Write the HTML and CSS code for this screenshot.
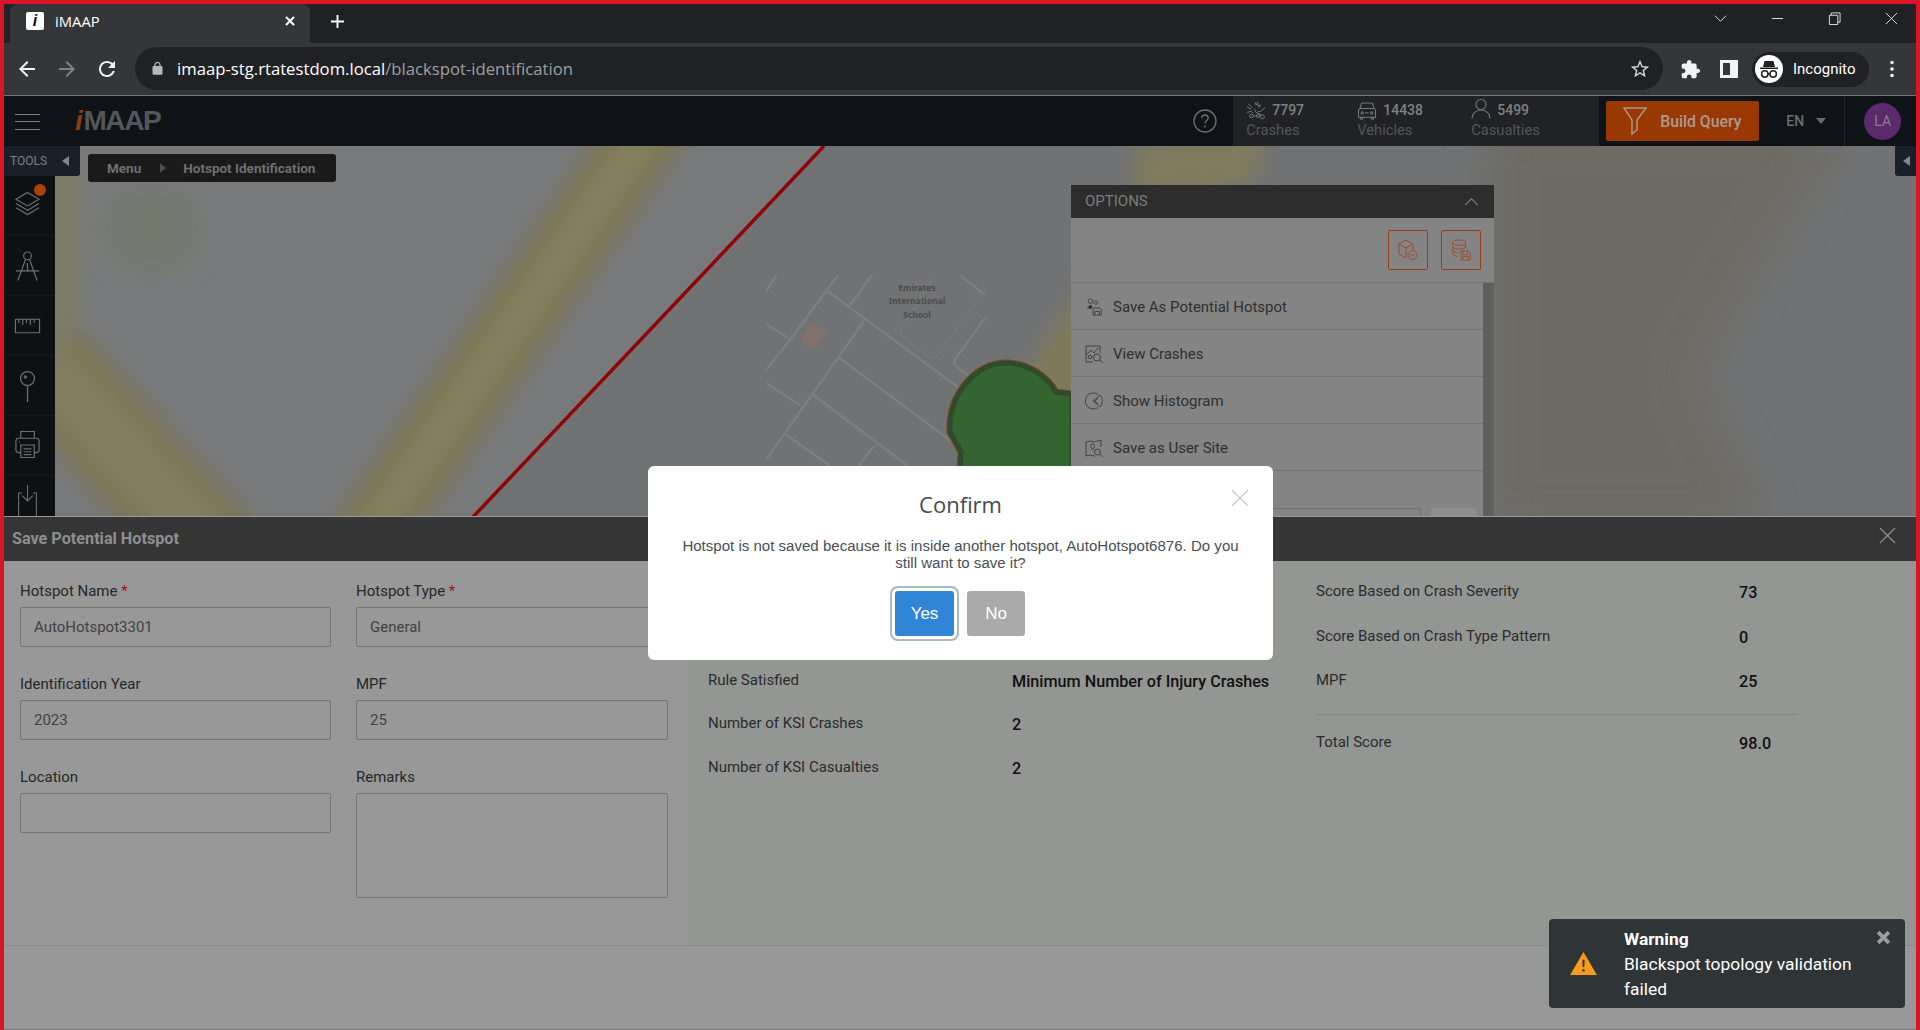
FILE: index.html
```html
<!DOCTYPE html>
<html lang="en">
<head>
<meta charset="utf-8">
<title>iMAAP</title>
<link rel="stylesheet" href="styles.css">
</head>
<body>
<div class="frame">
  <div class="tabstrip">
    <div class="tab">
      <span class="favicon">i</span>
      <span class="tab-title">iMAAP</span>
      <svg class="tab-close" viewBox="0 0 12 12"><path d="M2 2l8 8M10 2l-8 8"/></svg>
    </div>
    <svg class="new-tab" viewBox="0 0 16 16"><path d="M8 1v14M1 8h14"/></svg>
    <div class="win-controls">
      <svg class="win win-chevron" viewBox="0 0 14 14"><path d="M1 4l6 6 6-6"/></svg>
      <svg class="win win-min" viewBox="0 0 14 14"><path d="M1 7h12"/></svg>
      <svg class="win win-restore" viewBox="0 0 14 14"><path d="M1.5 3.5h9v10h-9zM3.5 3.5v-2.500h9.500v10h-2.500"/></svg>
      <svg class="win win-close" viewBox="0 0 14 14"><path d="M1 1l12 12M13 1L1 13"/></svg>
    </div>
  </div>
  <div class="toolbar">
    <svg class="nav nav-back" viewBox="0 0 24 24"><path d="M20 11H7.83l5.59-5.59L12 4l-8 8 8 8 1.41-1.41L7.83 13H20v-2z"/></svg>
    <svg class="nav nav-fwd" viewBox="0 0 24 24"><path d="M4 11h12.17l-5.59-5.59L12 4l8 8-8 8-1.41-1.41L16.17 13H4v-2z"/></svg>
    <svg class="nav nav-reload" viewBox="0 0 24 24"><path d="M17.65 6.35C16.2 4.9 14.21 4 12 4c-4.42 0-7.99 3.58-7.99 8s3.57 8 7.99 8c3.73 0 6.84-2.55 7.73-6h-2.08c-.82 2.33-3.04 4-5.65 4-3.31 0-6-2.69-6-6s2.69-6 6-6c1.66 0 3.14.69 4.22 1.78L13 11h7V4l-2.35 2.35z"/></svg>
    <div class="omnibox">
      <svg class="lock" viewBox="0 0 24 24"><path d="M18 8h-1V6c0-2.76-2.24-5-5-5S7 3.24 7 6v2H6c-1.1 0-2 .9-2 2v10c0 1.1.9 2 2 2h12c1.1 0 2-.9 2-2V10c0-1.1-.9-2-2-2zM9 8V6c0-1.66 1.34-3 3-3s3 1.34 3 3v2H9z"/></svg>
      <span class="url"><span class="url-host">imaap-stg.rtatestdom.local</span>/blackspot-identification</span>
      <svg class="star" viewBox="0 0 24 24"><path d="M22 9.24l-7.19-.62L12 2 9.19 8.63 2 9.24l5.46 4.73L5.82 21 12 17.27 18.18 21l-1.63-7.03L22 9.24zM12 15.4l-3.76 2.27 1-4.28-3.32-2.88 4.38-.38L12 6.1l1.71 4.04 4.38.38-3.32 2.88 1 4.28L12 15.4z"/></svg>
    </div>
    <svg class="ext" viewBox="0 0 24 24"><path d="M20.5 11H19V7c0-1.1-.9-2-2-2h-4V3.5C13 2.12 11.88 1 10.5 1S8 2.12 8 3.5V5H4c-1.1 0-1.99.9-1.99 2v3.8H3.5c1.49 0 2.7 1.21 2.7 2.7s-1.21 2.7-2.7 2.7H2V20c0 1.1.9 2 2 2h3.8v-1.5c0-1.49 1.21-2.7 2.7-2.7 1.49 0 2.7 1.21 2.7 2.7V22H17c1.1 0 2-.9 2-2v-4h1.5c1.38 0 2.5-1.12 2.5-2.5S21.88 11 20.5 11z"/></svg>
    <svg class="sidepanel" viewBox="0 0 18 18"><path fill-rule="evenodd" d="M0 0h18v18H0zM3 3v12h7V3z"/></svg>
    <div class="incognito">
      <svg class="inc-icon" viewBox="0 0 28 28"><circle cx="14" cy="14" r="14" fill="#fff"/><path d="M9.5 6h9l1.5 6h-12zM5 12.5h18v1.6H5z" fill="#222"/><circle cx="9.8" cy="19" r="3.2" fill="none" stroke="#222" stroke-width="1.5"/><circle cx="18.2" cy="19" r="3.2" fill="none" stroke="#222" stroke-width="1.5"/><path d="M13 19h2" stroke="#222" stroke-width="1.3"/></svg>
      <span class="inc-label">Incognito</span>
    </div>
    <svg class="kebab" viewBox="0 0 4 18"><circle cx="2" cy="2.5" r="1.8"/><circle cx="2" cy="9" r="1.8"/><circle cx="2" cy="15.5" r="1.8"/></svg>
  </div>

  <header class="app-header">
    <div class="hamburger"><span></span><span></span><span></span></div>
    <div class="logo"><span class="logo-i">i</span>MAAP</div>
    <svg class="help" viewBox="0 0 24 24"><circle cx="12" cy="12" r="11"/><path d="M8.8 9.2c0-2 1.5-3.2 3.2-3.2s3.2 1.2 3.2 3c0 2.6-3.2 2.6-3.2 5.4"/><path d="M12 16.6v1.8"/></svg>
    <div class="stats">
      <div class="stat stat-crashes">
        <div class="stat-top">
          <svg class="stat-icon" viewBox="0 0 22 20"><path d="M10 1l1 3 2-3v4l3-1-2 3M1 6l5 3M3 3l4 4M1 12l5-1 2 2M21 7l-5 4-3 0M9 8l2 4 6 3"/><circle cx="6" cy="16" r="2"/><circle cx="13" cy="16" r="1.6"/><circle cx="18" cy="17" r="2.2"/><path d="M8 16h3.500M14.500 15l2-1"/></svg>
          <span class="stat-num">7797</span>
        </div>
        <div class="stat-label">Crashes</div>
      </div>
      <div class="stat stat-vehicles">
        <div class="stat-top">
          <svg class="stat-icon" viewBox="0 0 20 20"><path d="M1 17V10c0-1 .5-1.500 1.500-2l1.500-5c.2-.8.8-1 1.500-1h9c.7 0 1.300.2 1.500 1l1.500 5c1 .5 1.500 1 1.500 2v7zM3 8h14M3 17v2h2.500v-2M14.500 17v2H17v-2"/><circle cx="5" cy="12.500" r="1.200"/><circle cx="15" cy="12.500" r="1.200"/><path d="M8 12.500h4"/></svg>
          <span class="stat-num">14438</span>
        </div>
        <div class="stat-label">Vehicles</div>
      </div>
      <div class="stat stat-casualties">
        <div class="stat-top">
          <svg class="stat-icon stat-person" viewBox="0 0 20 20"><circle cx="10" cy="6" r="5"/><path d="M1 20c0-5 4-8.500 9-8.500s9 3.500 9 8.500"/></svg>
          <span class="stat-num">5499</span>
        </div>
        <div class="stat-label">Casualties</div>
      </div>
    </div>
    <button class="build-query" type="button">
      <svg class="funnel" viewBox="0 0 24 28"><path d="M1 1h22l-9 12v10l-5 4V13z"/></svg>
      <span>Build Query</span>
    </button>
    <div class="lang">EN<span class="lang-caret"></span></div>
    <div class="avatar-wrap"><div class="avatar">LA</div></div>
  </header>

  <main class="workspace">
    <section class="map">
      <svg class="map-art" viewBox="4 146 1912 370" preserveAspectRatio="none">
        <defs>
          <filter id="blur-road" x="-20%" y="-20%" width="140%" height="140%"><feGaussianBlur stdDeviation="9"/></filter>
          <filter id="blur-soft" x="-30%" y="-30%" width="160%" height="160%"><feGaussianBlur stdDeviation="18"/></filter>
          <filter id="blur-wide" x="-20%" y="-20%" width="140%" height="140%"><feGaussianBlur stdDeviation="22"/></filter>
          <clipPath id="tile-clip"><rect x="766" y="275" width="224" height="191"/></clipPath>
        </defs>
        <rect x="4" y="146" width="1912" height="370" fill="#717273"/>
        <polygon points="4,146 824,146 472,516 4,516" fill="#78797a"/>
        <polygon points="1490,120 1850,120 1760,260 1695,375 1765,530 1490,530" fill="#6c6b63" filter="url(#blur-wide)"/>
        <g filter="url(#blur-road)">
          <path d="M50 146h24v200H50z" fill="#7f7a5e"/>
          <path d="M45 365L280 625" stroke="#7a7356" stroke-width="100" fill="none"/>
          <path d="M45 365L280 625" stroke="#827d5c" stroke-width="62" fill="none"/>
          <path d="M358 552L660 112" stroke="#7a7356" stroke-width="74" fill="none"/>
          <path d="M358 552L660 112" stroke="#837e5c" stroke-width="42" fill="none"/>
          <path d="M1000 480L1195 160L1250 130" stroke="#7f795c" stroke-width="66" fill="none"/>
        </g>
        <ellipse cx="152" cy="227" rx="40" ry="36" fill="#73776a" filter="url(#blur-soft)"/>
        <path d="M472 518L824 146" stroke="#8f0404" stroke-width="3.500" fill="none"/>
        <rect x="1135" y="146" width="120" height="38" fill="#7f7a5e" filter="url(#blur-road)"/>
        <g clip-path="url(#tile-clip)">
          <g stroke="#7d7e7e" stroke-width="2.500" fill="none">
            <path d="M766 370L790 340L838 275"/>
            <path d="M826 290L1000 418"/>
            <path d="M766 324L788 338"/>
            <path d="M766 383L800 405"/>
            <path d="M864 321L766 460"/>
            <path d="M838 357L990 470"/>
            <path d="M812 394L920 475"/>
            <path d="M785 434L850 480"/>
            <path d="M872 275L848 308"/>
            <path d="M875 445L855 470"/>
            <path d="M985 318L956 358Q952 364 958 368L985 388"/>
            <path d="M960 275L985 295"/>
            <path d="M766 292L776 275"/>
          </g>
          <path d="M935 275L902 328Q898 334 905 339L930 357Q934 360 938 355L985 290" stroke="#7b7c7c" stroke-width="1" fill="none"/>
          <polygon points="813,322 826,333 813,351 800,339" fill="#83716f"/>
        </g>
        <path d="M960 470L961 452L950 432C948 395 975 364 1005 363C1030 363 1048 378 1056 392L1072 394V470Z" fill="#346530" stroke="#7b4d16" stroke-width="7"/>
        <path d="M960 470L961 452L950 432C948 395 975 364 1005 363C1030 363 1048 378 1056 392L1072 394V470Z" fill="#346530" stroke="#2f4a2d" stroke-width="5"/>
      </svg>
      <div class="tile-label">Emirates<br>International<br>School</div>

      <aside class="tools">
        <div class="tools-tab"><span>TOOLS</span><i class="caret-left"></i></div>
        <div class="tool tool-layers">
          <i class="tool-badge"></i>
          <svg viewBox="0 0 28 28"><path d="M14 3L26 10 14 17 2 10zM2 14.500L14 21.500 26 14.500M2 19L14 26 26 19"/></svg>
        </div>
        <div class="tool">
          <svg viewBox="0 0 28 32"><circle cx="14" cy="5.500" r="4"/><path d="M12 9L4 31M16 9L24 31M2 21h24M14 13v9"/></svg>
        </div>
        <div class="tool">
          <svg viewBox="0 0 28 18"><path d="M1.500 2h25v14h-25zM5 2v4M9 2v6M13 2v4M17 2v6M21 2v4"/></svg>
        </div>
        <div class="tool">
          <svg viewBox="0 0 16 30"><circle cx="8" cy="8" r="6.500"/><circle cx="6" cy="6.500" r="1"/><path d="M8 14.500V30"/></svg>
        </div>
        <div class="tool tool-print">
          <svg viewBox="0 0 28 30"><path d="M7 9V2h14v7M7 24H5c-2 0-3-1-3-3V12c0-2 1-3 3-3h18c2 0 3 1 3 3v9c0 2-1 3-3 3h-2M7 16h14v13H7zM10 20h8M10 23h8M10 26h8M5 13h1"/></svg>
        </div>
        <div class="tool tool-last">
          <svg viewBox="0 0 24 36"><path d="M12 0v18M6 12l6 6 6-6M6 9H2v27M18 9h4v27"/></svg>
        </div>
      </aside>

      <nav class="crumbs">
        <span>Menu</span><i class="caret-right"></i><span>Hotspot Identification</span>
      </nav>

      <div class="right-tab"><i class="caret-left"></i></div>

      <section class="options">
        <div class="options-head">
          <span>OPTIONS</span>
          <svg class="chev-up" viewBox="0 0 16 10"><path d="M1 9l7-7 7 7"/></svg>
        </div>
        <div class="options-tools">
          <button class="opt-btn" type="button">
            <svg viewBox="0 0 22 22"><path d="M9 1l7 4v6M9 1L2 5v10l7 4M2 5l7 4 7-4M9 9v10"/><circle cx="15.500" cy="16" r="4.500"/><path d="M13 16h5"/></svg>
          </button>
          <button class="opt-btn" type="button">
            <svg viewBox="0 0 22 24"><ellipse cx="9" cy="4" rx="7" ry="3"/><path d="M2 4v12c0 1.500 2 2.500 5 3M16 4v6M2 8c0 1.500 3 3 7 3s7-1.500 7-3M2 12c0 1.500 3 3 6 3"/><path d="M11 13h8l2 2v8H11zM13 13v4h5v-4M13 23v-4h6v4"/></svg>
          </button>
        </div>
        <div class="options-list">
          <div class="opt-rows">
            <div class="opt-row">
              <svg viewBox="0 0 18 20"><circle cx="5" cy="3.500" r="2.500"/><circle cx="11" cy="5" r="2"/><circle cx="5" cy="10" r="1.800" fill="#2e3030"/><path d="M1 12l3-2"/><path d="M9 11h6l2 2v6H8v-7zM10 19v-4h5v4"/></svg>
              <span>Save As Potential Hotspot</span>
            </div>
            <div class="opt-row">
              <svg viewBox="0 0 18 18"><path d="M15 8V1H1v16h7M1 10l5-5 3 3 4-5"/><circle cx="12" cy="12.500" r="3.500"/><path d="M15 15l3 3"/><circle cx="5" cy="12" r="1.800"/></svg>
              <span>View Crashes</span>
            </div>
            <div class="opt-row">
              <svg viewBox="0 0 18 18"><path d="M13 2.500A8 8 0 1 0 13 15.500"/><path d="M15 3L8 9l7 6c3-3.500 3-8.500 0-12z"/><path d="M13 6L10 9l3 3"/></svg>
              <span>Show Histogram</span>
            </div>
            <div class="opt-row">
              <svg viewBox="0 0 18 18"><path d="M1 3l4 -1 4 1 7-2v7M1 3v14l4-1 4 1h1"/><path d="M7 10C5 8 5 5 7.500 5S10 8 8 10L7.500 11z"/><circle cx="12.500" cy="13" r="3"/><path d="M15 15l3 3"/></svg>
              <span>Save as User Site</span>
            </div>
            <div class="opt-row opt-row-form">
              <span class="opt-input"></span>
              <span class="opt-go"></span>
            </div>
          </div>
          <div class="opt-scroll"></div>
        </div>
      </section>
    </section>

    <section class="panel">
      <div class="panel-head">
        <span>Save Potential Hotspot</span>
        <svg class="panel-close" viewBox="0 0 18 18"><path d="M1 1l16 16M17 1L1 17"/></svg>
      </div>
      <div class="panel-main">
        <form class="form-grid">
          <div class="field">
            <label>Hotspot Name <em>*</em></label>
            <div class="input">AutoHotspot3301</div>
          </div>
          <div class="field">
            <label>Hotspot Type <em>*</em></label>
            <div class="input">General</div>
          </div>
          <div class="field">
            <label>Identification Year</label>
            <div class="input">2023</div>
          </div>
          <div class="field">
            <label>MPF</label>
            <div class="input">25</div>
          </div>
          <div class="field">
            <label>Location</label>
            <div class="input"></div>
          </div>
          <div class="field">
            <label>Remarks</label>
            <div class="input input-area"></div>
          </div>
        </form>
        <div class="details">
          <div class="details-mid">
            <div class="row row-mid"><span class="row-label">Rule Satisfied</span><span class="row-value">Minimum Number of Injury Crashes</span></div>
            <div class="row row-mid"><span class="row-label">Number of KSI Crashes</span><span class="row-value">2</span></div>
            <div class="row row-mid"><span class="row-label">Number of KSI Casualties</span><span class="row-value">2</span></div>
          </div>
          <div class="details-score">
            <div class="row row-score"><span class="row-label">Score Based on Crash Severity</span><span class="row-value">73</span></div>
            <div class="row row-score"><span class="row-label">Score Based on Crash Type Pattern</span><span class="row-value">0</span></div>
            <div class="row row-score"><span class="row-label">MPF</span><span class="row-value">25</span></div>
            <div class="row row-score row-total"><span class="row-label">Total Score</span><span class="row-value">98.0</span></div>
          </div>
        </div>
      </div>
      <div class="panel-foot"></div>
    </section>

    <div class="modal">
      <svg class="modal-close" viewBox="0 0 20 20"><path d="M1 1l18 18M19 1L1 19"/></svg>
      <h2>Confirm</h2>
      <p>Hotspot is not saved because it is inside another hotspot, AutoHotspot6876. Do you still want to save it?</p>
      <div class="modal-actions">
        <button class="btn btn-yes" type="button">Yes</button>
        <button class="btn btn-no" type="button">No</button>
      </div>
    </div>

    <div class="toast">
      <svg class="toast-icon" viewBox="0 0 28 24"><path d="M14 0L28 24H0z" fill="#f89c1c"/><path d="M12.800 8h2.400l-.4 8h-1.600zM12.800 18h2.400v2.400h-2.400z" fill="#2f3437"/></svg>
      <div class="toast-body">
        <strong>Warning</strong>
        <span>Blackspot topology validation failed</span>
      </div>
      <svg class="toast-close" viewBox="0 0 14 14"><path d="M2 2l10 10M12 2L2 12"/></svg>
    </div>
  </main>
</div>
</body>
</html>
```

FILE: styles.css
```css
* { box-sizing: border-box; }
html, body { margin: 0; padding: 0; }
body { width: 1920px; height: 1030px; overflow: hidden; background: #989898; font-family: Roboto, "Liberation Sans", sans-serif; }

.frame {
  width: 1920px; height: 1030px;
  border: solid #dc1428; border-width: 4px 4px 0 4px;
  display: flex; flex-direction: column;
  position: relative; overflow: hidden;
}

/* browser chrome */
.tabstrip { height: 39px; background: #202124; display: flex; align-items: flex-start; padding-left: 6px; flex: none; }
.tab { width: 300px; height: 39px; background: #35363a; border-radius: 8px 8px 0 0; display: flex; align-items: center; padding: 0 14px 5px 16px; color: #fff; }
.favicon { width: 18px; height: 18px; background: #fdfdfd; border-radius: 2px; color: #111; font: italic 700 16px/18px "Liberation Sans", sans-serif; text-align: center; flex: none; }
.tab-title { font: 14.800px "Open Sans", sans-serif; margin-left: 11px; flex: 1; }
.tab-close { width: 12px; height: 12px; stroke: #fff; stroke-width: 2; fill: none; }
.new-tab { width: 15px; height: 15px; margin: 10px 0 0 20px; stroke: #fff; stroke-width: 2; fill: none; }
.win-controls { margin-left: auto; display: flex; align-items: center; height: 28px; padding-right: 18px; gap: 44px; }
.win { width: 13px; height: 13px; stroke: #e8e8e8; stroke-width: 1; fill: none; }
.toolbar { height: 53px; background: #35363a; display: flex; align-items: center; border-bottom: 1px solid #73757a; flex: none; padding-left: 11px; }
.nav { width: 24px; height: 24px; fill: #f1f3f4; flex: none; }
.nav-fwd { fill: #7f8184; margin-left: 16px; }
.nav-reload { margin-left: 16px; }
.omnibox { width: 1528px; height: 43px; margin-left: 16px; border-radius: 22px; background: #202124; display: flex; align-items: center; padding-left: 15px; flex: none; margin-top: -1px; }
.lock { width: 15px; height: 15px; fill: #b5b7ba; flex: none; }
.url { font: 16.700px "Open Sans", sans-serif; color: #9aa0a6; margin-left: 12px; white-space: nowrap; }
.url-host { color: #fff; }
.star { width: 22px; height: 22px; fill: #d4d6d8; margin-left: auto; margin-right: 12px; }
.ext { width: 21px; height: 21px; fill: #f1f3f4; margin-left: 17px; flex: none; }
.sidepanel { width: 18px; height: 18px; fill: #f1f3f4; margin-left: 19px; flex: none; }
.incognito { width: 117px; height: 35px; margin-left: 14px; border-radius: 18px; background: #202124; display: flex; align-items: center; padding-left: 3px; flex: none; }
.inc-icon { width: 28px; height: 28px; }
.inc-label { font: 15px Roboto, sans-serif; color: #fff; margin-left: 10px; }
.kebab { width: 4px; height: 18px; fill: #f1f3f4; margin-left: 21px; flex: none; }

/* app header */
.app-header { height: 50px; background: #0f1216; display: flex; align-items: center; flex: none; color: #6a6c70; }
.hamburger { width: 25px; margin: 1px 0 0 11px; display: flex; flex-direction: column; gap: 6.500px; flex: none; }
.hamburger span { height: 1px; background: #7d7f82; }
.logo { margin-left: 35px; font: 700 28px/28px "Liberation Sans", sans-serif; color: #55565a; letter-spacing: -1.400px; flex: none; }
.logo-i { color: #8c3c14; font-style: italic; margin-right: 2px; }
.help { width: 24px; height: 24px; margin-left: 1033px; stroke: #6f7072; stroke-width: 1.300; fill: none; flex: none; }
.stats { height: 50px; width: 366px; background: #202226; margin-left: 16px; display: flex; flex: none; padding: 4px 0 0 13px; }
.stat-crashes { width: 111px; }
.stat-vehicles { width: 114px; }
.stat-top { display: flex; align-items: center; gap: 6px; height: 20px; }
.stat-icon { width: 20px; height: 19px; stroke: #77787a; stroke-width: 1.100; fill: none; flex: none; }
.stat-person { margin-top: -3px; width: 20px; height: 23px; }
.stat-num { font: 500 14px Roboto, sans-serif; color: #7f8082; }
.stat-label { font: 14.700px/20px Roboto, sans-serif; color: #55575a; }
.build-query { width: 153px; height: 40px; margin-left: 7px; border: 0; border-radius: 2px; background: #993800; color: #ab9c92; font: 500 15.800px Roboto, sans-serif; display: flex; align-items: center; padding: 0 0 0 17px; flex: none; }
.funnel { width: 24px; height: 28px; stroke: #a9968a; stroke-width: 1.500; fill: none; margin-right: 13px; }
.lang { width: 58px; margin-left: 27px; font: 500 14px Roboto, sans-serif; color: #6b6d70; flex: none; display: flex; align-items: center; }
.lang-caret { margin-left: 12px; border: 5px solid transparent; border-top: 6px solid #6b6d70; border-bottom: 0; }
.avatar-wrap { height: 50px; flex: 1; border-left: 1px solid #22252a; display: flex; align-items: center; padding-left: 19px; }
.avatar { width: 37px; height: 37px; border-radius: 50%; background: #5a2a6a; color: #8d7c93; font: 14px/37px Roboto, sans-serif; text-align: center; }

/* map */
.workspace { flex: 1; display: flex; flex-direction: column; position: relative; min-height: 0; }
.map { height: 370px; position: relative; flex: none; overflow: hidden; background: #78797a; }
.map-art { position: absolute; left: 0; top: 0; width: 1912px; height: 370px; display: block; }
.tile-label { position: absolute; left: 863px; top: 135px; width: 100px; text-align: center; font: 700 8.500px/13.300px "Noto Sans", sans-serif; color: #4b4c4e; }

.tools { position: absolute; left: 0; top: 0; width: 51px; }
.tools-tab { width: 76px; height: 30px; background: #1a2028; color: #7b8186; font: 12px Roboto, sans-serif; display: flex; align-items: center; padding-left: 6px; border-radius: 0 0 3px 0; }
.tools-tab i { margin-left: 15px; }
.caret-left { display: block; border: 5px solid transparent; border-right: 7px solid #82878c; border-left: 0; }
.caret-right { display: block; border: 5px solid transparent; border-left: 6px solid #4d4d4d; border-right: 0; margin: 0 17px 0 19px; }
.tool { height: 60px; background: #0e1114; border-bottom: 1px solid #15181c; display: flex; align-items: center; justify-content: center; position: relative; padding-right: 5px; }
.tool svg { width: 27px; height: 32px; stroke: #6e6f71; stroke-width: 1.200; fill: none; }
.tool-layers { padding-bottom: 5px; }
.tool-print { padding-bottom: 3px; }
.tool-badge { position: absolute; left: 30px; top: 8px; width: 12px; height: 12px; border-radius: 50%; background: #a8420a; }
.tool-last { height: 40px; border: 0; align-items: flex-start; padding-top: 9px; overflow: hidden; }
.crumbs { position: absolute; left: 84px; top: 8px; width: 248px; height: 28px; background: #1a1a1a; border-radius: 3px; display: flex; align-items: center; padding-left: 19px; font: 700 13.500px Roboto, sans-serif; color: #6f6f6f; }
.right-tab { position: absolute; right: 0; top: 0; width: 21px; height: 30px; background: #1a2028; border-radius: 0 0 0 3px; display: flex; align-items: center; padding-left: 8px; }

.options { position: absolute; left: 1067px; top: 39px; width: 423px; height: 331px; background: #848484; display: flex; flex-direction: column; }
.options-head { height: 33px; background: #2d2d2d; color: #7c7c7c; font: 15px/33px Roboto, sans-serif; padding: 0 11px 0 14px; display: flex; align-items: center; justify-content: space-between; flex: none; }
.chev-up { width: 15px; height: 9px; stroke: #7f7f7f; stroke-width: 1.200; fill: none; margin-right: 4px; }
.options-tools { height: 65px; display: flex; justify-content: flex-end; align-items: flex-start; gap: 13px; padding: 12px 13px 0 0; border-bottom: 1px solid #737373; flex: none; }
.opt-btn { width: 40px; height: 40px; padding: 0; background: transparent; border: 1px solid #9a3c12; border-radius: 2px; display: flex; align-items: center; justify-content: center; }
.opt-btn svg { width: 22px; height: 22px; stroke: #9e4a2c; stroke-width: 1; fill: none; }
.options-list { flex: 1; display: flex; min-height: 0; }
.opt-rows { flex: 1; overflow: hidden; }
.opt-scroll { width: 11px; background: #5e5e5e; flex: none; }
.opt-row { height: 47px; border-bottom: 1px solid #737373; display: flex; align-items: center; padding: 1px 0 0 14px; font: 15px Roboto, sans-serif; color: #2e3030; }
.opt-row svg { width: 18px; height: 18px; stroke: #2e3030; stroke-width: .8; fill: none; margin-right: 10px; flex: none; }
.opt-row-form { border: 0; align-items: flex-start; padding: 37px 0 0 0; justify-content: flex-end; gap: 10px; }
.opt-input { width: 230px; height: 12px; border: 1px solid #6d6d6d; border-radius: 2px; }
.opt-go { width: 46px; height: 12px; background: #8e8e8e; border-radius: 2px; margin-right: 6px; }

/* panel */
.panel { flex: 1; display: flex; flex-direction: column; background: #989898; min-height: 0; }
.panel-head { height: 45px; background: #353535; border-top: 1px solid #9a9a9a; color: #8f8f8f; font: 700 16.200px Roboto, sans-serif; display: flex; align-items: center; justify-content: space-between; padding: 0 20px 1px 8px; flex: none; }
.panel-close { width: 17px; height: 17px; stroke: #8e8e8e; stroke-width: 1.300; fill: none; margin-top: -6px; }
.panel-main { height: 384px; display: flex; flex: none; }
.form-grid { width: 684px; padding: 20px 20px 0 16px; display: grid; grid-template-columns: 311px 312px; column-gap: 25px; align-content: start; flex: none; }
.field label { display: block; font: 15px/20px Roboto, sans-serif; color: #252728; margin-bottom: 6px; }
.field label em { color: #a01020; font-style: normal; }
.input { height: 40px; border: 1px solid #757575; border-radius: 2px; padding-left: 13px; font: 15px/38px Roboto, sans-serif; color: #404242; margin-bottom: 27px; }
.input-area { height: 105px; margin-bottom: 0; }
.details { flex: 1; display: flex; background: #949694; }
.details-mid { width: 628px; padding: 97px 0 0 20px; flex: none; }
.details-score { flex: 1; padding: 8px 0 0 0; }
.row { display: flex; align-items: center; font: 15px Roboto, sans-serif; color: #2a2c2c; }
.row-mid { height: 43.500px; }
.row-mid .row-label { width: 304px; flex: none; }
.row-score { height: 44.500px; width: 483px; }
.row-score .row-label { width: 423px; flex: none; }
.row-value { color: #111; font: 500 16.200px Roboto, sans-serif; margin-top: 3px; white-space: nowrap; }
.row-total { border-top: 1px solid #858785; margin-top: 11px; height: 56px; }
.panel-foot { flex: 1; border-top: 1px solid #8b8b8b; background: #989898; border-bottom: 1px solid #777; }

/* modal */
.modal { position: absolute; left: 644px; top: 320px; width: 625px; height: 194px; background: #fff; border-radius: 6px; text-align: center; }
.modal h2 { margin: 24px 0 0; font: 400 22px/28px "Open Sans", sans-serif; color: #444b52; }
.modal p { margin: 19px 30px 0; font: 15.050px/17px "Liberation Sans", sans-serif; color: #4a4f55; }
.modal-close { position: absolute; right: 24px; top: 23px; width: 18px; height: 18px; stroke: #ccc; stroke-width: 1.500; fill: none; }
.modal-actions { display: flex; justify-content: center; gap: 13px; margin-top: 20px; padding-right: 1px; }
.btn { height: 45px; border: 0; border-radius: 3px; color: #fff; font: 17px "Liberation Sans", sans-serif; padding: 0; }
.btn-yes { width: 59px; background: #3085d6; box-shadow: 0 0 0 3px #fff, 0 0 0 5px #a9b9cc; }
.btn-no { width: 58px; background: #aaa; }

/* toast */
.toast { position: absolute; left: 1545px; top: 773px; width: 356px; height: 89px; background: #2f3437; border-radius: 4px; color: #fff; display: flex; padding-left: 21px; }
.toast-icon { width: 27px; height: 23px; margin-top: 33px; flex: none; }
.toast-body { margin-left: 27px; width: 250px; padding-top: 8px; font: 17.400px/25px Roboto, sans-serif; }
.toast-body strong { display: block; font-weight: 700; }
.toast-close { position: absolute; right: 14px; top: 11px; width: 15px; height: 15px; stroke: #9b9ea0; stroke-width: 3.500; fill: none; }
```
